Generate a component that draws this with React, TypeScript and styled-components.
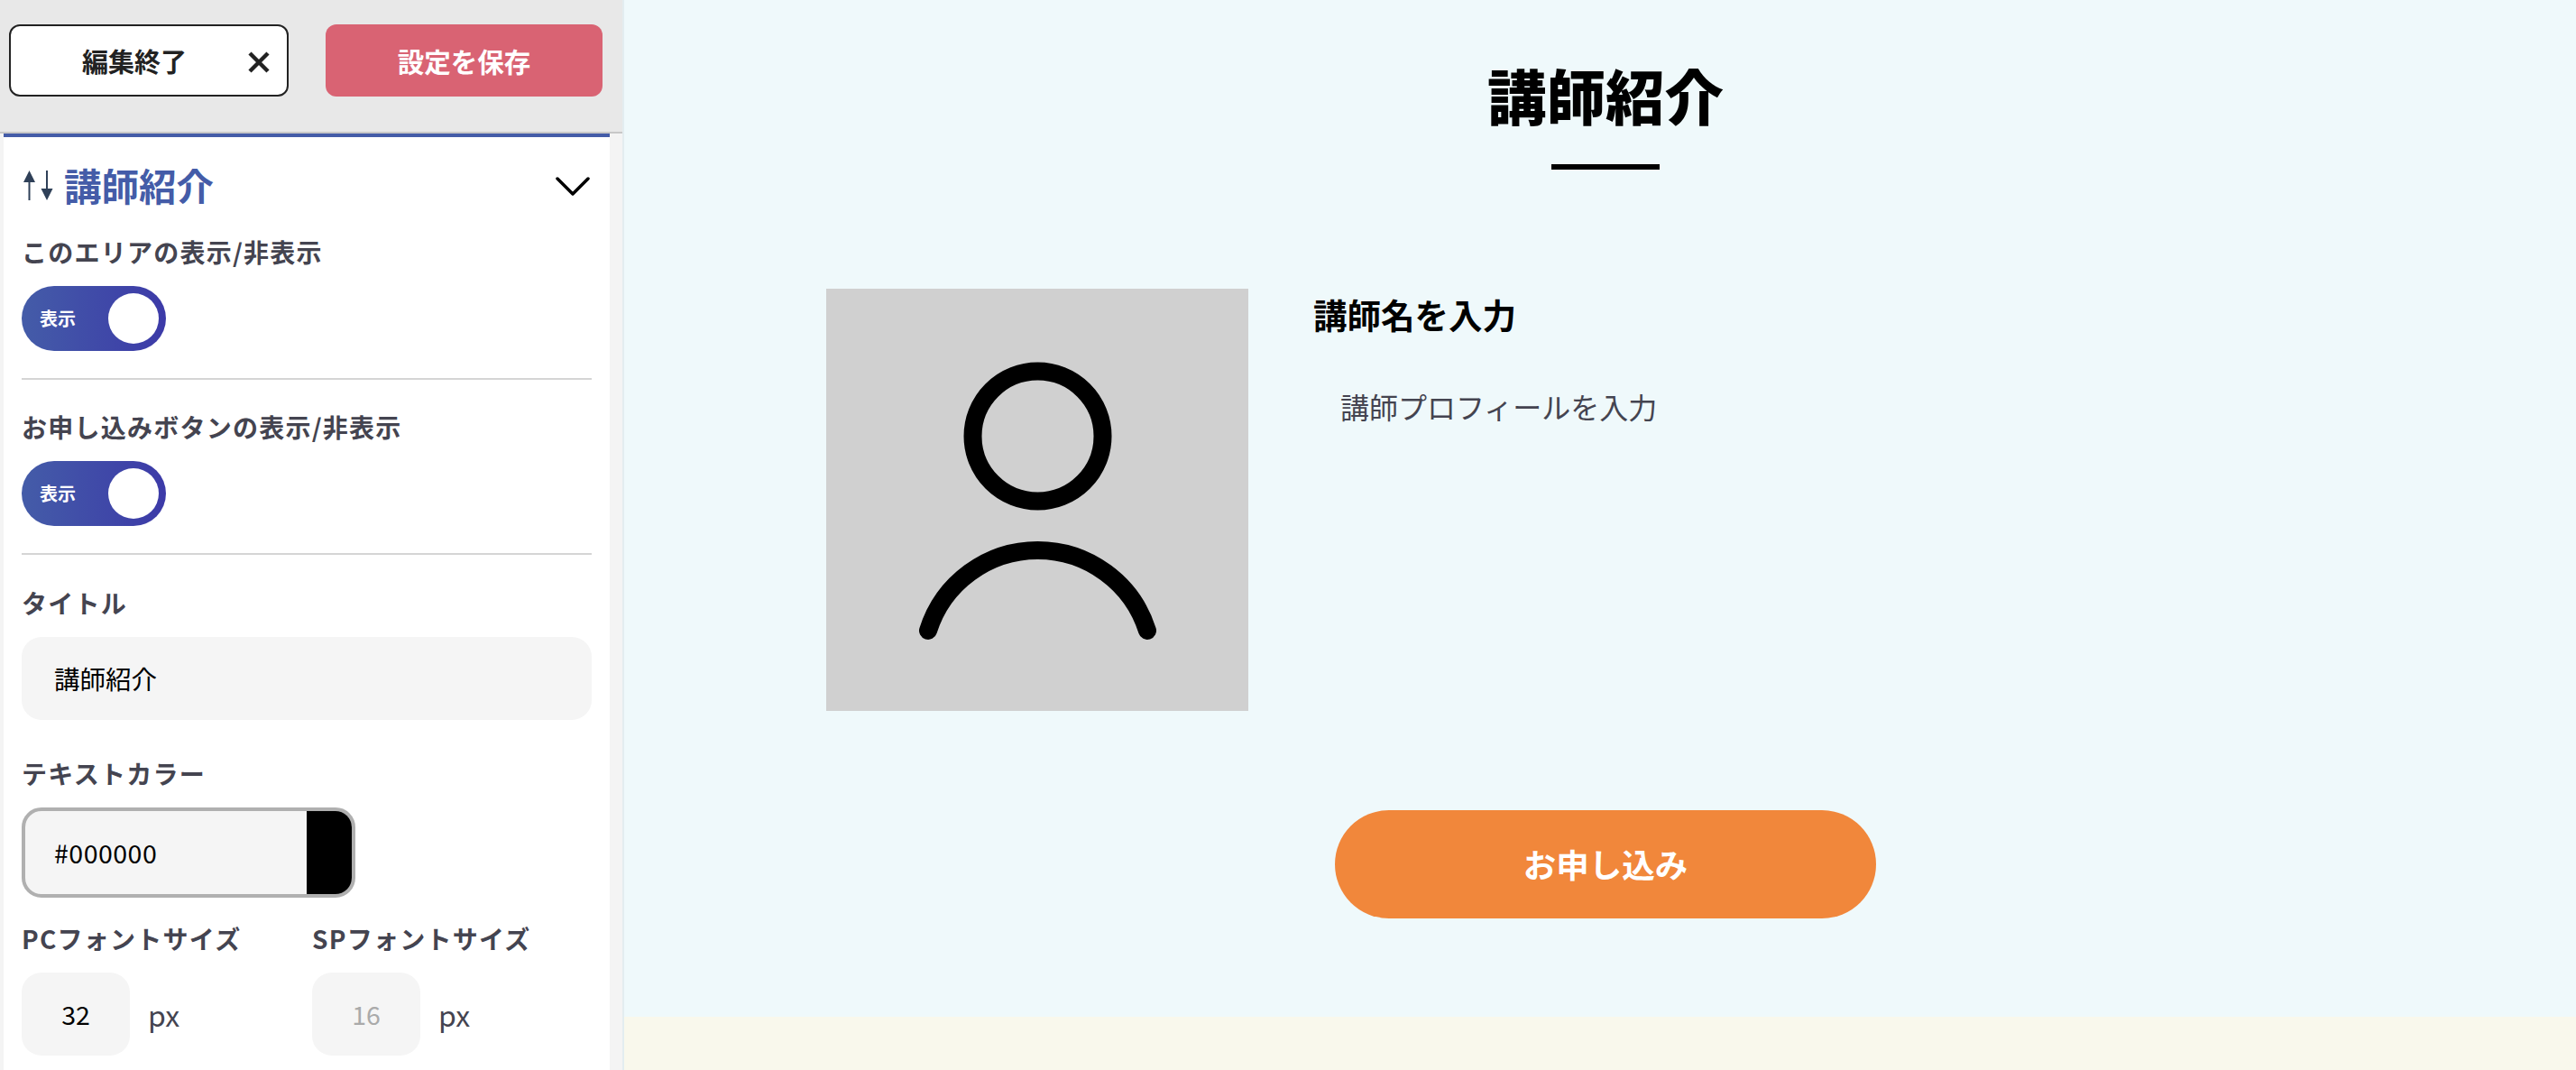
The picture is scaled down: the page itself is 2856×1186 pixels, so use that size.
import React from "react";
import styled, { createGlobalStyle } from "styled-components";

const FONT = `"Noto Sans CJK JP", "Noto Sans", sans-serif`;

const Global = createGlobalStyle`
  html, body { margin: 0; padding: 0; height: 1186px; overflow: hidden; background: #eff9fb; }
  * { box-sizing: border-box; }
  body { font-family: ${FONT}; }
`;

const Page = styled.div`
  display: flex;
  width: 2856px;
  height: 1186px;
  overflow: hidden;
`;

const Sidebar = styled.aside`
  flex: 0 0 692px;
  height: 1186px;
  background: #f4f4f4;
  border-right: 2px solid #e3edf0;
  overflow: hidden;
`;

const TopBar = styled.div`
  display: flex;
  align-items: flex-start;
  gap: 41px;
  height: 148px;
  padding: 27px 0 0 10px;
  background: #e8e8e8;
  border-bottom: 2px solid #c8c8c8;
`;

const CloseButton = styled.button`
  position: relative;
  display: flex;
  align-items: center;
  width: 310px;
  height: 80px;
  padding: 0 0 0 79px;
  background: #fff;
  border: 2px solid #222;
  border-radius: 12px;
  color: #222;
  font: 700 29px/36px ${FONT};
  & > svg { position: absolute; left: 263px; top: 28px; }
`;

const SaveButton = styled.button`
  width: 307px;
  height: 80px;
  padding: 0;
  background: #d96373;
  border: 0;
  border-radius: 12px;
  color: #fff;
  font: 700 29.5px/36px ${FONT};
`;

const Panel = styled.div`
  margin-left: 4px;
  width: 672px;
  height: 1038px;
  padding: 34px 20px 0;
  background: #fff;
  border-top: 4px solid #445ca8;
`;

const Heading = styled.div`
  display: flex;
  align-items: center;
  height: 40px;
`;

const ReorderIcon = styled.svg`
  margin-left: 2px;
`;

const HeadingText = styled.h2`
  margin: -2px 0 0 12px;
  color: #445ca8;
  font: 700 41.5px/40px ${FONT};
`;

const Chevron = styled.svg`
  margin-left: auto;
  margin-right: 2px;
`;

const Group = styled.div<{ $top: number }>`
  margin-top: ${(p) => p.$top}px;
`;

const Label = styled.div`
  color: #444450;
  font: 700 28px/40px ${FONT};
  letter-spacing: 1.25px;
`;

const Toggle = styled.div`
  position: relative;
  display: flex;
  align-items: center;
  width: 160px;
  height: 72px;
  margin-top: 18px;
  padding-left: 20px;
  border-radius: 36px;
  background: linear-gradient(90deg, #445ca8, #3c3aa8);
  color: #fff;
  font: 700 20px/24px ${FONT};
`;

const Knob = styled.span`
  position: absolute;
  top: 8px;
  right: 8px;
  width: 56px;
  height: 56px;
  border-radius: 50%;
  background: #fff;
`;

const Divider = styled.hr`
  height: 2px;
  margin: 30px 0 0;
  border: 0;
  background: #d5d5d5;
`;

const TextInput = styled.div`
  display: flex;
  align-items: center;
  height: 92px;
  margin-top: 18px;
  padding-left: 36px;
  border-radius: 22px;
  background: #f5f5f5;
  color: #000;
  font: 400 28.5px/36px ${FONT};
`;

const ColorInput = styled.div`
  display: flex;
  align-items: center;
  width: 370px;
  height: 100px;
  margin-top: 18px;
  padding-left: 32px;
  border: 4px solid #b0b0b0;
  border-radius: 22px;
  background: #f5f5f5;
  color: #000;
  font: 400 28.5px/36px ${FONT};
  letter-spacing: 0.5px;
  overflow: hidden;
`;

const Swatch = styled.span`
  align-self: stretch;
  width: 50px;
  margin-left: auto;
  background: #000;
`;

const SizeRow = styled.div`
  display: grid;
  grid-template-columns: 322px 1fr;
  margin-top: 25px;
`;

const UnitRow = styled.div`
  display: flex;
  align-items: center;
  gap: 20px;
  margin-top: 18px;
  color: #444450;
  font: 400 32px/40px ${FONT};
`;

const NumberInput = styled.div<{ $muted?: boolean }>`
  display: flex;
  align-items: center;
  justify-content: center;
  width: 120px;
  height: 92px;
  border-radius: 22px;
  background: #f5f5f5;
  color: ${(p) => (p.$muted ? "#aaa" : "#000")};
  font: 400 28.5px/36px ${FONT};
`;

const Main = styled.main`
  flex: 1;
  display: flex;
  flex-direction: column;
  height: 1186px;
`;

const Section = styled.section`
  display: flex;
  flex-direction: column;
  align-items: center;
  height: 1127px;
  padding: 59px 0 0 12px;
  background: #eff9fb;
`;

const Title = styled.h1`
  margin: 0;
  color: #000;
  font: 900 65.5px/92px ${FONT};
  text-align: center;
`;

const TitleRule = styled.div`
  width: 120px;
  height: 6px;
  margin-top: 31px;
  background: #000;
`;

const Profile = styled.div`
  display: flex;
  align-self: flex-start;
  gap: 72px;
  margin: 132px 0 0 212px;
`;

const Photo = styled.div`
  display: flex;
  align-items: center;
  justify-content: center;
  width: 468px;
  height: 468px;
  background: #d0d0d0;
`;

const ProfileBody = styled.div`
  display: flex;
  flex-direction: column;
`;

const Name = styled.div`
  margin-top: 6px;
  color: #000;
  font: 700 37.5px/44px ${FONT};
`;

const Bio = styled.div`
  margin: 56px 0 0 30px;
  color: #444450;
  font: 400 32px/48px ${FONT};
`;

const ApplyButton = styled.button`
  width: 600px;
  height: 120px;
  margin-top: 110px;
  padding: 0;
  border: 0;
  border-radius: 60px;
  background: #f1873b;
  color: #fff;
  font: 700 36.5px/48px ${FONT};
`;

const Band = styled.div`
  flex: 1;
  background: #f9f8ec;
`;

const VisibilityToggle = () => (
  <Toggle>
    表示
    <Knob />
  </Toggle>
);

export default function App() {
  return (
    <Page>
      <Global />
      <Sidebar>
        <TopBar>
          <CloseButton>
            編集終了
            <svg width="24" height="24" viewBox="0 0 24 24" fill="none" stroke="#222" strokeWidth="4.5">
              <path d="M2 2 L22 22 M22 2 L2 22" />
            </svg>
          </CloseButton>
          <SaveButton>設定を保存</SaveButton>
        </TopBar>
        <Panel>
          <Heading>
            <ReorderIcon width="33" height="34" viewBox="0 0 33 34" fill="#2f4058">
              <path d="M6.5 0 L13 13 H7.5 V33 H5.5 V13 H0 Z" />
              <path d="M26 33 L19.5 20 H25 V0 H27 V20 H32.5 Z" />
            </ReorderIcon>
            <HeadingText>講師紹介</HeadingText>
            <Chevron width="38" height="22" viewBox="0 0 38 22" fill="none" stroke="#000" strokeWidth="3.5" strokeLinecap="round" strokeLinejoin="round">
              <path d="M2 3 L19 20 L36 3" />
            </Chevron>
          </Heading>
          <Group $top={33}>
            <Label>このエリアの表示/非表示</Label>
            <VisibilityToggle />
          </Group>
          <Divider />
          <Group $top={32}>
            <Label>お申し込みボタンの表示/非表示</Label>
            <VisibilityToggle />
          </Group>
          <Divider />
          <Group $top={33}>
            <Label>タイトル</Label>
            <TextInput>講師紹介</TextInput>
          </Group>
          <Group $top={39}>
            <Label>テキストカラー</Label>
            <ColorInput>
              #000000
              <Swatch />
            </ColorInput>
          </Group>
          <SizeRow>
            <div>
              <Label>PCフォントサイズ</Label>
              <UnitRow>
                <NumberInput>32</NumberInput>
                px
              </UnitRow>
            </div>
            <div>
              <Label>SPフォントサイズ</Label>
              <UnitRow>
                <NumberInput $muted>16</NumberInput>
                px
              </UnitRow>
            </div>
          </SizeRow>
        </Panel>
      </Sidebar>
      <Main>
        <Section>
          <Title>講師紹介</Title>
          <TitleRule />
          <Profile>
            <Photo>
              <svg width="468" height="468" viewBox="0 0 468 468" fill="none" stroke="#000" strokeWidth="20" strokeLinecap="round">
                <circle cx="234.5" cy="163.5" r="72" />
                <path d="M113 379 A 127.4 127.4 0 0 1 356 379" />
              </svg>
            </Photo>
            <ProfileBody>
              <Name>講師名を入力</Name>
              <Bio>講師プロフィールを入力</Bio>
            </ProfileBody>
          </Profile>
          <ApplyButton>お申し込み</ApplyButton>
        </Section>
        <Band />
      </Main>
    </Page>
  );
}
